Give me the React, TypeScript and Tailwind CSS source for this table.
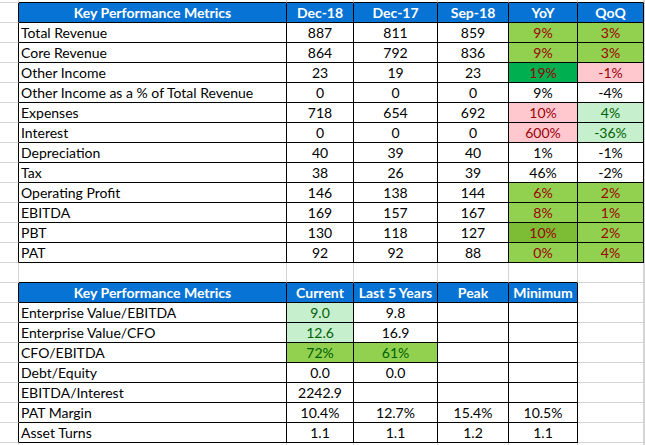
import React from "react";

type C = { t?: string; bg?: string; fg?: string; left?: boolean; bold?: boolean };

const G = "bg-[#92d050]";
const DG = "bg-[#00b050]";
const MG = "bg-[#7cbd35]";
const P = "bg-[#ffc7ce]";
const LG = "bg-[#c6efce]";
const HB = "bg-[#0673d5]";
const RED = "text-[#9c0006]";
const GRN = "text-[#006100]";

const widths = ["w-[19px]", "w-[268px]", "w-[67px]", "w-[84px]", "w-[71px]", "w-[69px]", "w-[66px]", "flex-1"];

const t1: [string, string, string, string, C, C][] = [
  ["Total Revenue", "887", "811", "859", { t: "9%", bg: G, fg: RED }, { t: "3%", bg: G, fg: RED }],
  ["Core Revenue", "864", "792", "836", { t: "9%", bg: G, fg: RED }, { t: "3%", bg: G, fg: RED }],
  ["Other Income", "23", "19", "23", { t: "19%", bg: DG, fg: RED }, { t: "-1%", bg: P, fg: RED }],
  ["Other Income as a % of Total Revenue", "0", "0", "0", { t: "9%" }, { t: "-4%" }],
  ["Expenses", "718", "654", "692", { t: "10%", bg: P, fg: RED }, { t: "4%", bg: LG, fg: GRN }],
  ["Interest", "0", "0", "0", { t: "600%", bg: P, fg: RED }, { t: "-36%", bg: LG, fg: GRN }],
  ["Depreciation", "40", "39", "40", { t: "1%" }, { t: "-1%" }],
  ["Tax", "38", "26", "39", { t: "46%" }, { t: "-2%" }],
  ["Operating Profit", "146", "138", "144", { t: "6%", bg: G, fg: RED }, { t: "2%", bg: G, fg: RED }],
  ["EBITDA", "169", "157", "167", { t: "8%", bg: G, fg: RED }, { t: "1%", bg: G, fg: RED }],
  ["PBT", "130", "118", "127", { t: "10%", bg: MG, fg: RED }, { t: "2%", bg: G, fg: RED }],
  ["PAT", "92", "92", "88", { t: "0%", bg: G, fg: RED }, { t: "4%", bg: G, fg: RED }],
];

const t2: [string, C, C, string, string][] = [
  ["Enterprise Value/EBITDA", { t: "9.0", bg: LG, fg: GRN }, { t: "9.8" }, "", ""],
  ["Enterprise Value/CFO", { t: "12.6", bg: LG, fg: GRN }, { t: "16.9" }, "", ""],
  ["CFO/EBITDA", { t: "72%", bg: G, fg: GRN }, { t: "61%", bg: G, fg: GRN }, "", ""],
  ["Debt/Equity", { t: "0.0" }, { t: "0.0" }, "", ""],
  ["EBITDA/Interest", { t: "2242.9" }, { t: "" }, "", ""],
  ["PAT Margin", { t: "10.4%" }, { t: "12.7%" }, "15.4%", "10.5%"],
  ["Asset Turns", { t: "1.1" }, { t: "1.1" }, "1.2", "1.1"],
];

type Row = { h: string; cells: C[]; table: number }; // table: 0 none, 1 table1 (B..G), 2 table2 (B..F)

const hdr = (t: string): C => ({ t, bg: HB, fg: "text-white", bold: true });

const rows: Row[] = [];
rows.push({ h: "h-[3px]", cells: [], table: 0 });
rows.push({
  h: "h-[20px]",
  table: 1,
  cells: [{}, hdr("Key Performance Metrics"), hdr("Dec-18"), hdr("Dec-17"), hdr("Sep-18"), hdr("YoY"), hdr("QoQ"), {}],
});
t1.forEach((r) =>
  rows.push({
    h: "h-[20px]",
    table: 1,
    cells: [{}, { t: r[0], left: true }, { t: r[1] }, { t: r[2] }, { t: r[3] }, r[4], r[5], {}],
  })
);
rows.push({ h: "h-[20px]", cells: [], table: 0 });
rows.push({
  h: "h-[20px]",
  table: 2,
  cells: [{}, hdr("Key Performance Metrics"), hdr("Current"), hdr("Last 5 Years"), hdr("Peak"), hdr("Minimum"), {}, {}],
});
t2.forEach((r) =>
  rows.push({
    h: "h-[20px]",
    table: 2,
    cells: [{}, { t: r[0], left: true }, r[1], r[2], { t: r[3] }, { t: r[4] }, {}, {}],
  })
);
rows.push({ h: "h-[10px]", cells: [], table: 0 });

const inT = (ri: number, ci: number) => {
  const r = rows[ri];
  if (!r) return false;
  if (r.table === 1) return ci >= 1 && ci <= 6;
  if (r.table === 2) return ci >= 1 && ci <= 5;
  return false;
};

export default function App() {
  return (
    <div
      className="w-[645px] h-[445px] overflow-hidden bg-white flex flex-col"
      style={{ fontFamily: "Lato, 'Liberation Sans', sans-serif" }}
    >
      {rows.map((r, ri) => (
        <div key={ri} className={`flex shrink-0 ${r.h}`}>
          {widths.map((w, ci) => {
            const c: C = r.cells[ci] || {};
            const rBlack = inT(ri, ci) || inT(ri, ci + 1);
            const bBlack = inT(ri, ci) || inT(ri + 1, ci);
            return (
              <div
                key={ci}
                className={`${w} shrink-0 h-full border-r border-b ${rBlack ? "border-r-black" : "border-r-[#d4d4d4]"} ${
                  bBlack ? "border-b-black" : "border-b-[#d4d4d4]"
                } ${c.bg || "bg-white"} ${c.fg || "text-black"} ${c.bold ? "font-bold" : ""} flex items-end ${
                  c.left ? "justify-start pl-[2px]" : "justify-center"
                } text-[14px] leading-[18px] whitespace-nowrap overflow-visible`}
              >
                {c.t}
              </div>
            );
          })}
        </div>
      ))}
    </div>
  );
}
